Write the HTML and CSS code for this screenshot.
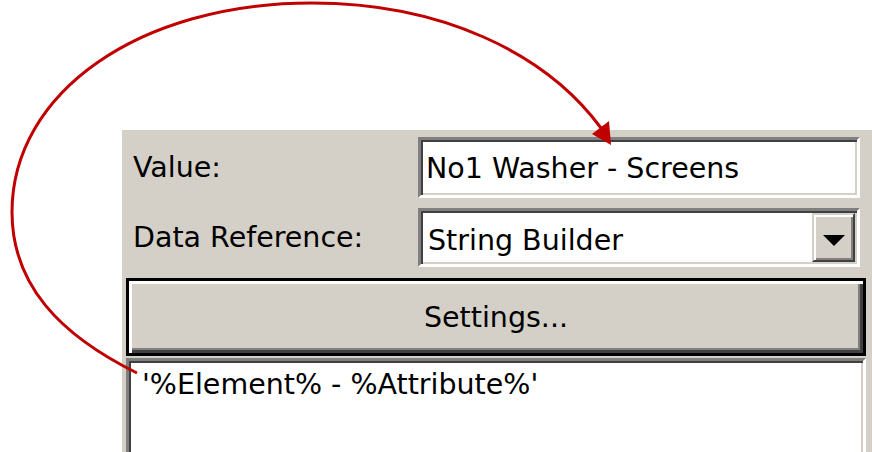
FILE: index.html
```html
<!DOCTYPE html>
<html>
<head>
<meta charset="utf-8">
<link rel="stylesheet" href="styles.css">
</head>
<body>
<div class="stage">
  <div class="panel">
    <div class="row row-value">
      <span class="label">Value:</span>
      <div class="field textbox">No1 Washer - Screens</div>
    </div>
    <div class="row row-ref">
      <span class="label">Data Reference:</span>
      <div class="field combo">
        <span class="combo-text">String Builder</span>
        <span class="combo-btn"><span class="tri"></span></span>
      </div>
    </div>
    <div class="settings">Settings...</div>
    <div class="textarea">'%Element% - %Attribute%'</div>
  </div>
  <svg class="arrow" width="872" height="452" viewBox="0 0 872 452">
    <path d="M137,373 C60,335 12,285 12,212 C12,92 140,3 312,3 C440,3 545,52 601,128" fill="none" stroke="#c00000" stroke-width="3"/>
    <polygon points="611,145 592,134 609,121" fill="#c00000"/>
  </svg>
</div>
</body>
</html>
```
FILE: styles.css
```css
html, body {
  margin: 0;
  padding: 0;
  background: #ffffff;
}
body {
  width: 872px;
  height: 452px;
  overflow: hidden;
  font-family: "DejaVu Sans", Verdana, sans-serif;
  font-size: 28.5px;
  color: #000;
}
.stage {
  position: relative;
  width: 872px;
  height: 452px;
  padding: 130px 0 0 122px;
  box-sizing: border-box;
}
.panel {
  background: #d4d0c8;
  height: 322px;
  overflow: hidden;
  padding: 7px 6px 0 4px;
  box-sizing: border-box;
  display: flex;
  flex-direction: column;
}
.row {
  display: flex;
  align-items: center;
  flex: 0 0 auto;
}
.row-value { height: 61px; }
.row-ref { height: 59px; margin-top: 10px; }
.label {
  flex: 0 0 292px;
  padding-left: 7px;
  box-sizing: border-box;
  white-space: nowrap;
}
.field {
  flex: 0 0 442px;
  height: 100%;
  box-sizing: border-box;
  background: #fff;
  border: 3px solid;
  border-color: #808080 #ffffff #ffffff #808080;
  box-shadow: inset 2px 2px 0 #404040, inset -2px -2px 0 #d4d0c8;
}
.textbox {
  display: flex;
  align-items: center;
  padding: 2px 0 0 5px;
  white-space: nowrap;
}
.combo {
  display: flex;
  align-items: stretch;
  padding: 2px 2px 2px 7px;
}
.combo-text {
  flex: 1;
  display: flex;
  align-items: center;
  padding-top: 6px;
  white-space: nowrap;
}
.combo-btn {
  flex: 0 0 43px;
  background: #d4d0c8;
  box-sizing: border-box;
  border: 2px solid;
  border-color: #d4d0c8 #404040 #404040 #d4d0c8;
  box-shadow: inset 2px 2px 0 #ffffff, inset -2px -2px 0 #808080;
  display: flex;
  align-items: center;
  justify-content: center;
}
.tri {
  width: 0;
  height: 0;
  border-left: 11px solid transparent;
  border-right: 11px solid transparent;
  border-top: 11px solid #000;
  margin-top: 6px;
}
.settings {
  margin-top: 11px;
  height: 78px;
  flex: 0 0 78px;
  box-sizing: border-box;
  border: 3px solid #000;
  background: #d4d0c8;
  box-shadow: inset 3px 3px 0 #ffffff, inset -3px -3px 0 #404040, inset -5px -5px 0 #808080;
  display: flex;
  align-items: center;
  justify-content: center;
}
.textarea {
  margin-top: 2px;
  flex: 0 0 140px;
  box-sizing: border-box;
  background: #fff;
  border: 3px solid;
  border-color: #808080 #ffffff #ffffff #808080;
  box-shadow: inset 2px 2px 0 #404040, inset -2px -2px 0 #d4d0c8;
  padding: 7px 0 0 13px;
  line-height: 34px;
  white-space: nowrap;
}
.arrow {
  position: absolute;
  left: 0;
  top: 0;
  pointer-events: none;
}
```
